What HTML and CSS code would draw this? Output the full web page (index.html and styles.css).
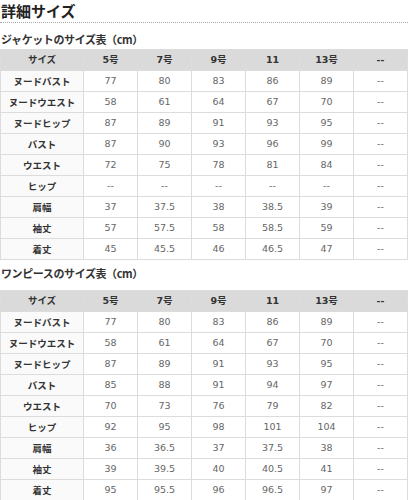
FILE: index.html
```html
<!DOCTYPE html>
<html lang="ja">
<head>
<meta charset="utf-8">
<link rel="stylesheet" href="styles.css">
</head>
<body>
<h1 class="title">詳細サイズ</h1>

<h2 class="sub sub-first">ジャケットのサイズ表（cm）</h2>
<table class="size">
  <colgroup><col class="c-label"><col><col><col><col><col><col></colgroup>
  <thead>
    <tr><th>サイズ</th><th>5号</th><th>7号</th><th>9号</th><th>11</th><th>13号</th><th>--</th></tr>
  </thead>
  <tbody>
    <tr><th>ヌードバスト</th><td>77</td><td>80</td><td>83</td><td>86</td><td>89</td><td>--</td></tr>
    <tr><th>ヌードウエスト</th><td>58</td><td>61</td><td>64</td><td>67</td><td>70</td><td>--</td></tr>
    <tr><th>ヌードヒップ</th><td>87</td><td>89</td><td>91</td><td>93</td><td>95</td><td>--</td></tr>
    <tr><th>バスト</th><td>87</td><td>90</td><td>93</td><td>96</td><td>99</td><td>--</td></tr>
    <tr><th>ウエスト</th><td>72</td><td>75</td><td>78</td><td>81</td><td>84</td><td>--</td></tr>
    <tr><th>ヒップ</th><td>--</td><td>--</td><td>--</td><td>--</td><td>--</td><td>--</td></tr>
    <tr><th>肩幅</th><td>37</td><td>37.5</td><td>38</td><td>38.5</td><td>39</td><td>--</td></tr>
    <tr><th>袖丈</th><td>57</td><td>57.5</td><td>58</td><td>58.5</td><td>59</td><td>--</td></tr>
    <tr><th>着丈</th><td>45</td><td>45.5</td><td>46</td><td>46.5</td><td>47</td><td>--</td></tr>
  </tbody>
</table>

<h2 class="sub sub-second">ワンピースのサイズ表（cm）</h2>
<table class="size">
  <colgroup><col class="c-label"><col><col><col><col><col><col></colgroup>
  <thead>
    <tr><th>サイズ</th><th>5号</th><th>7号</th><th>9号</th><th>11</th><th>13号</th><th>--</th></tr>
  </thead>
  <tbody>
    <tr><th>ヌードバスト</th><td>77</td><td>80</td><td>83</td><td>86</td><td>89</td><td>--</td></tr>
    <tr><th>ヌードウエスト</th><td>58</td><td>61</td><td>64</td><td>67</td><td>70</td><td>--</td></tr>
    <tr><th>ヌードヒップ</th><td>87</td><td>89</td><td>91</td><td>93</td><td>95</td><td>--</td></tr>
    <tr><th>バスト</th><td>85</td><td>88</td><td>91</td><td>94</td><td>97</td><td>--</td></tr>
    <tr><th>ウエスト</th><td>70</td><td>73</td><td>76</td><td>79</td><td>82</td><td>--</td></tr>
    <tr><th>ヒップ</th><td>92</td><td>95</td><td>98</td><td>101</td><td>104</td><td>--</td></tr>
    <tr><th>肩幅</th><td>36</td><td>36.5</td><td>37</td><td>37.5</td><td>38</td><td>--</td></tr>
    <tr><th>袖丈</th><td>39</td><td>39.5</td><td>40</td><td>40.5</td><td>41</td><td>--</td></tr>
    <tr><th>着丈</th><td>95</td><td>95.5</td><td>96</td><td>96.5</td><td>97</td><td>--</td></tr>
  </tbody>
</table>
</body>
</html>
```

FILE: styles.css
```css
html, body {
  margin: 0;
  padding: 0;
  background: #fff;
}

body {
  width: 408px;
  font-family: "DejaVu Sans", "Noto Sans CJK JP", sans-serif;
  color: #333;
}

.title {
  margin: 0;
  height: 20px;
  padding: 2px 0 0 1px;
  font-family: "Noto Sans CJK JP", sans-serif;
  font-size: 15px;
  line-height: 17px;
  font-weight: 700;
  color: #222;
  border-bottom: 1px dotted #aaa;
}

.sub {
  margin: 0;
  padding-left: 1px;
  font-family: "Noto Sans CJK JP", sans-serif;
  font-size: 11px;
  line-height: 15px;
  font-weight: 700;
  letter-spacing: -0.4px;
  color: #333;
}

.sub-first {
  padding-top: 9px;
  padding-bottom: 2px;
}

.sub-second {
  padding-top: 6px;
  padding-bottom: 9px;
}

.size {
  width: 408px;
  border-collapse: collapse;
  table-layout: fixed;
}

.c-label {
  width: 83px;
}

.size th,
.size td {
  height: 20px;
  padding: 0;
  border: 1px solid #dcdcdc;
  text-align: center;
  vertical-align: middle;
  font-size: 9.5px;
  line-height: 12px;
}

.size thead th {
  background: #dadada;
  font-weight: 700;
  color: #333;
}

.size tbody th {
  background: #fafafa;
  font-family: "Noto Sans CJK JP", sans-serif;
  font-weight: 700;
  color: #333;
}

.size td {
  color: #666;
  font-weight: 400;
}
```
